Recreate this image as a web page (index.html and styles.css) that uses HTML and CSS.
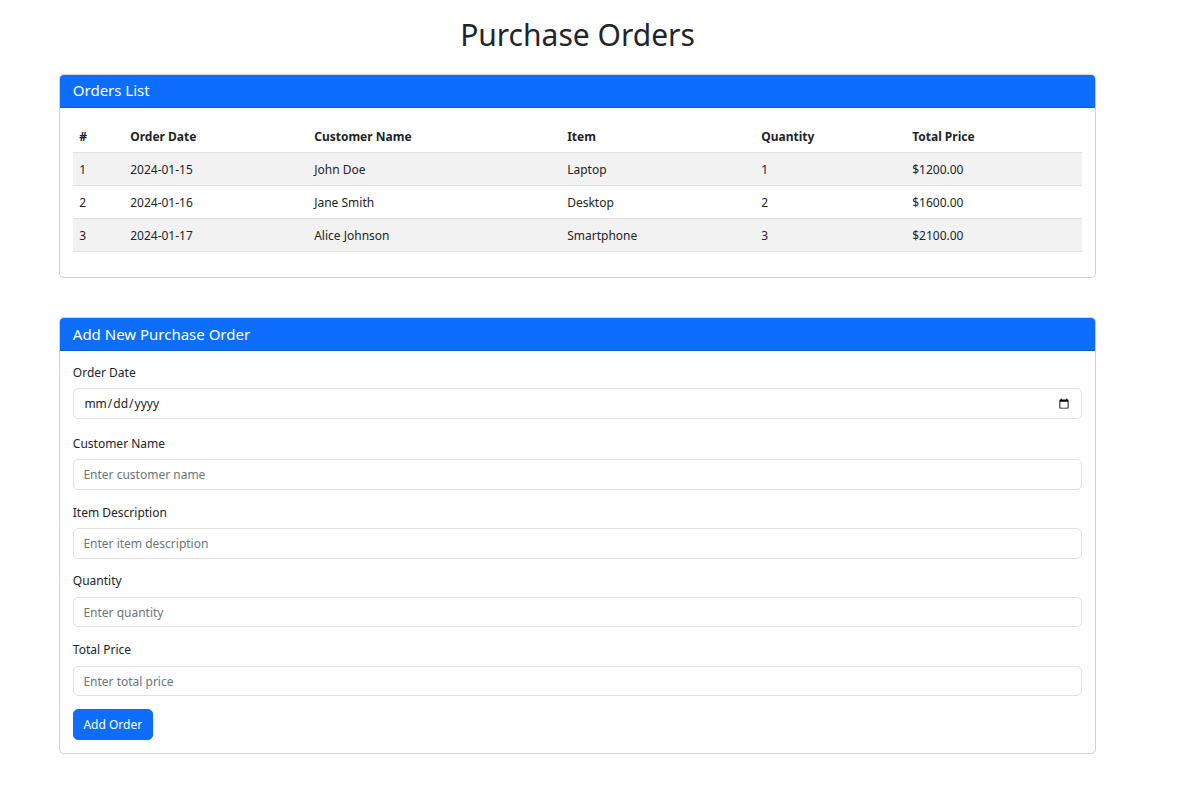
FILE: index.html
```html
<!DOCTYPE html>
<html lang="en">
<head>
<meta charset="utf-8">
<title>Purchase Orders</title>
<link rel="stylesheet" href="styles.css">
</head>
<body>
<div class="container">
  <h1 class="page-title">Purchase Orders</h1>

  <section class="card card-list">
    <div class="card-header"><h5 class="card-title">Orders List</h5></div>
    <div class="card-body">
      <table class="table">
        <colgroup>
          <col class="c1"><col class="c2"><col class="c3"><col class="c4"><col class="c5"><col class="c6">
        </colgroup>
        <thead>
          <tr><th>#</th><th>Order Date</th><th>Customer Name</th><th>Item</th><th>Quantity</th><th>Total Price</th></tr>
        </thead>
        <tbody>
          <tr class="odd"><td>1</td><td>2024-01-15</td><td>John Doe</td><td>Laptop</td><td>1</td><td>$1200.00</td></tr>
          <tr><td>2</td><td>2024-01-16</td><td>Jane Smith</td><td>Desktop</td><td>2</td><td>$1600.00</td></tr>
          <tr class="odd"><td>3</td><td>2024-01-17</td><td>Alice Johnson</td><td>Smartphone</td><td>3</td><td>$2100.00</td></tr>
        </tbody>
      </table>
    </div>
  </section>

  <section class="card">
    <div class="card-header"><h5 class="card-title">Add New Purchase Order</h5></div>
    <div class="card-body card-body-form">
      <form class="form">
        <div class="field field-first">
          <label class="label" for="orderDate">Order Date</label>
          <input class="input" type="date" id="orderDate">
        </div>
        <div class="field">
          <label class="label" for="customerName">Customer Name</label>
          <input class="input" type="text" id="customerName" placeholder="Enter customer name">
        </div>
        <div class="field">
          <label class="label" for="itemDescription">Item Description</label>
          <input class="input" type="text" id="itemDescription" placeholder="Enter item description">
        </div>
        <div class="field">
          <label class="label" for="quantity">Quantity</label>
          <input class="input" type="number" id="quantity" placeholder="Enter quantity">
        </div>
        <div class="field">
          <label class="label" for="totalPrice">Total Price</label>
          <input class="input" type="number" id="totalPrice" placeholder="Enter total price">
        </div>
        <button class="btn" type="submit">Add Order</button>
      </form>
    </div>
  </section>
</div>
</body>
</html>
```

FILE: styles.css
```css
* { box-sizing: border-box; }

html, body {
  margin: 0;
  background: #fff;
}

body {
  font-family: "Noto Sans", "Open Sans", "Liberation Sans", sans-serif;
  font-size: 12px;
  line-height: 19.2px;
  color: #212529;
}

.container {
  width: 1037px;
  margin: 0 0 0 59px;
  padding-top: 16px;
}

.page-title {
  margin: 0 0 19.2px;
  font-size: 30px;
  font-weight: 400;
  line-height: 38.4px;
  text-align: center;
}

.card {
  border: 1px solid rgba(0, 0, 0, 0.175);
  border-radius: 5px;
  overflow: hidden;
  background: #fff;
}

.card-list {
  margin-bottom: 39px;
}

.card-header {
  background: #0d6efd;
  color: #fff;
  padding: 6.4px 12.8px;
  border-bottom: 1px solid rgba(0, 0, 0, 0.175);
}

.card-title {
  margin: 0;
  font-size: 15px;
  font-weight: 400;
  line-height: 19.2px;
}

.card-body {
  padding: 12.8px;
}

.card-body-form {
  padding-bottom: 13px;
}

.table {
  width: 100%;
  border-collapse: collapse;
  table-layout: fixed;
  margin-bottom: 12px;
}

.c1 { width: 51px; }
.c2 { width: 184px; }
.c3 { width: 253px; }
.c4 { width: 194px; }
.c5 { width: 151px; }

.table th,
.table td {
  padding: 6.4px;
  text-align: left;
  border-bottom: 1px solid #dee2e6;
  vertical-align: top;
}

.table th {
  font-weight: 700;
}

.table tr.odd td {
  background: #f2f2f2;
}

.field {
  margin-bottom: 12.8px;
}

.label {
  display: block;
  margin-bottom: 6.4px;
}

.field-first .label {
  margin-top: -1px;
}

.field-first {
  margin-bottom: 15px;
}

.input {
  display: block;
  width: 100%;
  height: 30.4px;
  padding: 4.8px 9.6px;
  font-family: inherit;
  font-size: 12px;
  line-height: 19.2px;
  color: #212529;
  background: #fff;
  border: 1px solid #dee2e6;
  border-radius: 5px;
  outline: none;
}

.input::placeholder {
  color: #6c757d;
}

.btn {
  display: inline-block;
  height: 31px;
  padding: 4.8px 9.6px;
  font-family: inherit;
  font-size: 12px;
  line-height: 19.2px;
  color: #fff;
  background: #0d6efd;
  border: 1px solid #0d6efd;
  border-radius: 5px;
}
```
